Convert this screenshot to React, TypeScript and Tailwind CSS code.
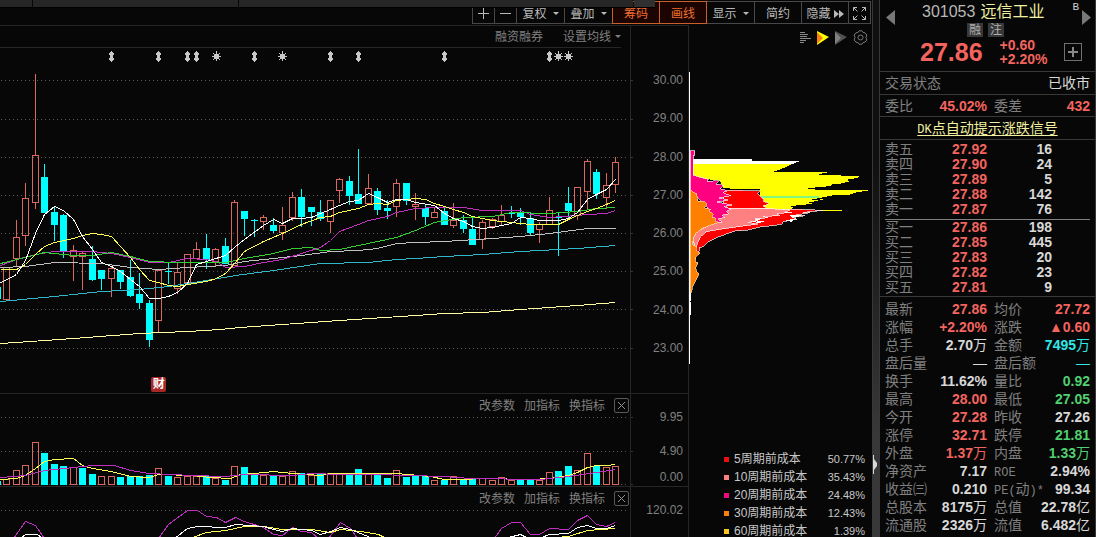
import type { ReactNode } from 'react';

// [high, bodyTop, bodyBottom, low, rising]
type Candle = [number, number, number, number, 0 | 1];

const CANDLES: Candle[] = [
  [267, 267, 300, 300, 1], [220, 237, 259, 267, 1], [183, 198, 236, 246, 1], [74, 155, 203, 209, 1],
  [164, 177, 213, 213, 0], [206, 212, 225, 241, 0], [214, 215, 251, 258, 0], [245, 250, 257, 281, 1],
  [251, 253, 257, 290, 1], [246, 259, 280, 281, 0], [270, 270, 279, 290, 0], [267, 268, 279, 297, 1],
  [270, 270, 282, 289, 0], [260, 277, 296, 297, 0], [273, 294, 303, 309, 0], [300, 303, 340, 347, 0],
  [269, 270, 321, 333, 1], [262, 271, 272, 284, 0], [263, 272, 289, 294, 1], [254, 254, 283, 283, 1],
  [242, 249, 259, 259, 1], [234, 248, 260, 269, 0], [248, 249, 262, 267, 1], [238, 246, 264, 264, 0],
  [200, 202, 266, 266, 1], [211, 211, 219, 236, 0], [219, 220, 221, 237, 0], [215, 217, 222, 230, 1],
  [218, 225, 231, 233, 0], [207, 225, 233, 240, 1], [192, 197, 218, 221, 1], [189, 197, 217, 227, 0],
  [207, 207, 212, 226, 0], [200, 212, 219, 221, 0], [200, 200, 222, 233, 1], [178, 179, 191, 203, 1],
  [176, 181, 196, 205, 0], [149, 194, 204, 204, 0], [174, 188, 204, 204, 1], [188, 191, 210, 215, 0],
  [200, 208, 211, 219, 0], [179, 183, 207, 217, 1], [183, 183, 201, 205, 0], [193, 204, 207, 220, 1],
  [204, 208, 217, 225, 0], [208, 212, 218, 218, 1], [208, 211, 225, 225, 0], [203, 220, 226, 228, 1],
  [215, 220, 229, 233, 0], [218, 229, 245, 245, 0], [220, 222, 240, 249, 1], [218, 219, 227, 229, 1],
  [205, 215, 222, 225, 1], [206, 213, 214, 218, 0], [208, 212, 217, 225, 0], [213, 218, 233, 235, 0],
  [222, 224, 230, 243, 1], [197, 210, 225, 225, 1], [213, 217, 218, 256, 0], [187, 203, 211, 219, 0],
  [187, 187, 216, 220, 1], [159, 161, 192, 210, 1], [169, 172, 194, 199, 0], [173, 185, 198, 209, 1],
  [157, 162, 185, 193, 1],
];

// top of each volume bar, baseline is 485
const VOLUME_TOPS = [
  479, 470, 465, 442, 453, 464, 466, 467, 468, 474, 476, 476, 477, 476, 476, 475, 468, 476, 477, 476,
  476, 476, 478, 480, 466, 467, 474, 475, 476, 476, 471, 473, 475, 474, 473, 473, 475, 469, 473, 475,
  478, 470, 477, 476, 476, 480, 480, 476, 479, 479, 478, 480, 477, 480, 480, 480, 480, 472, 471, 466,
  470, 453, 466, 467, 466,
];
// the few sessions whose volume colour is not simply the candle colour
const VOLUME_OVERRIDES: Record<number, boolean> = {
  8: false, 10: true, 32: true, 43: false, 53: true,
};

const MA_LINES = [
  { color: '#ffffa0', points: '0,343 30,341 73,338 139,333 187,331 220,329 240,327 282,324 339,320 415,315 444,313 482,312 520,309 577,305 615,302' },
  { color: '#30b8c8', points: '0,301 54,296 101,291 139,289 168,286 200,281 235,275 273,270 320,263 368,262 396,259 415,258 444,256 482,254 520,251 577,248 615,245' },
  { color: '#c0c0c0', points: '0,267 25,266 54,262 101,263 130,267 158,269 187,267 225,265 244,261 273,258 301,255 330,251 358,250 377,248 396,243 415,242 444,241 492,238 520,236 549,233 587,228 615,228' },
  { color: '#c030c0', points: '0,265 16,259 35,254 54,251 92,251 111,253 130,257 149,262 168,262 187,258 206,259 216,261 225,267 244,266 263,262 282,259 301,253 320,247 330,240 339,231 358,224 368,220 387,216 396,212 415,208 434,207 463,207 482,210 520,210 530,214 549,217 577,215 587,214 606,213 615,210' },
  { color: '#30d030', points: '0,263 25,257 44,252 73,255 92,255 111,252 130,256 149,261 177,262 225,262 244,258 273,253 292,248 311,247 320,250 339,249 358,245 396,237 415,230 434,222 463,217 492,216 511,212 549,213 577,211 596,208 615,207' },
  { color: '#ffff50', points: '0,269 16,269 25,264 35,254 44,246 54,242 73,238 82,235 92,233 101,234 111,236 120,246 130,257 139,269 149,280 158,282 168,285 177,286 187,284 206,281 216,278 225,273 235,262 244,251 263,241 282,233 301,224 320,217 330,216 339,212 358,208 368,204 377,203 387,204 396,200 415,198 425,199 434,203 444,206 453,209 463,212 472,216 492,220 501,221 511,222 530,224 558,224 568,219 577,215 587,211 596,208 606,204 615,200' },
  { color: '#ffffff', points: '0,282 7,279 16,274 25,260 35,233 44,214 54,206 63,210 73,219 82,236 92,249 101,262 111,266 120,271 130,279 139,286 149,298 158,298 168,296 177,292 187,283 196,264 206,261 225,255 235,246 244,239 263,225 273,219 282,223 292,218 301,218 311,217 320,213 330,209 339,205 349,201 358,200 368,193 377,197 387,202 396,199 406,199 415,202 434,205 444,213 453,218 463,221 472,226 482,228 492,227 501,225 511,223 520,217 530,218 539,220 558,220 568,218 577,212 587,199 596,194 606,189 615,179' },
];

const VOLUME_MA = [
  { color: '#ffff50', points: '0,479 16,478 25,475 35,468 44,461 54,459 73,458 82,465 92,468 111,471 130,476 149,477 158,474 192,475 210,477 230,478 240,474 254,473 273,471 292,473 320,475 330,473 358,473 396,473 430,476 444,479 463,479 482,478 530,479 549,478 568,475 577,472 587,467 596,465 606,465 615,464' },
  { color: '#c030c0', points: '0,477 25,475 44,470 73,467 92,465 114,465 130,470 149,473 192,475 225,476 244,474 292,475 311,473 340,474 374,474 444,476 470,478 540,479 568,476 596,472 615,469' },
];

const KDJ_LINES = [
  { color: '#c030c0', points: '13,538 25,521 35,525 44,538' },
  { color: '#c030c0', points: '158,538 168,524 187,510 197,510 206,516 216,517 225,522 235,517 244,521 263,527 273,534 282,535 292,527 301,531 311,532 318,538' },
  { color: '#c030c0', points: '328,538 340,522 350,528 357,538' },
  { color: '#c030c0', points: '494,538 501,528 511,522 520,522 530,534 539,534 549,528 568,529 577,520 587,515 596,524 606,526 615,522' },
  { color: '#ffff50', points: '192,537 206,532 225,530 244,526 263,526 282,529 311,529 330,532 340,529 360,531 378,534 386,538' },
  { color: '#ffff50', points: '556,537 568,536 587,530 615,528' },
  { color: '#ffffff', points: '20,538 25,534 37,534 42,538' },
  { color: '#ffffff', points: '174,538 187,528 197,526 225,527 235,524 263,526 273,529 282,531 292,528 311,530 320,534 330,531 340,527 350,529 365,535 372,538' },
  { color: '#ffffff', points: '508,537 520,534 528,538' },
  { color: '#ffffff', points: '541,537 549,534 568,533 577,527 587,525 596,528 606,528 615,525' },
];

const PRICE_TICKS = ['30.00', '29.00', '28.00', '27.00', '26.00', '25.00', '24.00', '23.00'];
const PRICE_GRID = [80, 119, 157, 195, 233, 271, 309, 348];
const ARROW_MARKS = [111, 158, 187, 196, 254, 330, 358, 444, 549];
const STAR_MARKS = [216, 282, 558, 568];

const COSTS = [
  { label: '5周期前成本', value: '50.77%', dot: 'bg-[#e81010]' },
  { label: '10周期前成本', value: '35.43%', dot: 'bg-[#f88080]' },
  { label: '20周期前成本', value: '24.48%', dot: 'bg-[#f00880]' },
  { label: '30周期前成本', value: '12.43%', dot: 'bg-[#f88010]' },
  { label: '60周期前成本', value: '1.39%', dot: 'bg-[#f8c820]' },
];

const ASKS = [
  ['卖五', '27.92', '16'], ['卖四', '27.90', '24'], ['卖三', '27.89', '5'], ['卖二', '27.88', '142'], ['卖一', '27.87', '76'],
];
const BIDS = [
  ['买一', '27.86', '198'], ['买二', '27.85', '445'], ['买三', '27.83', '20'], ['买四', '27.82', '23'], ['买五', '27.81', '9'],
];

const RED = 'text-[#f4645f]';
const GREEN = 'text-[#50d070]';
const CYAN = 'text-[#30e8e8]';
const WHITE = 'text-[#d8d8d8]';

type Quote = { label: ReactNode; value: string; unit?: string; tone: string };

const QUOTES: Quote[] = [
  { label: '最新', value: '27.86', tone: RED },
  { label: '均价', value: '27.72', tone: RED },
  { label: '涨幅', value: '+2.20%', tone: RED },
  { label: '涨跌', value: '▲0.60', tone: RED },
  { label: '总手', value: '2.70', unit: '万', tone: WHITE },
  { label: '金额', value: '7495', unit: '万', tone: CYAN },
  { label: '盘后量', value: '', unit: '—', tone: WHITE },
  { label: '盘后额', value: '', unit: '—', tone: CYAN },
  { label: '换手', value: '11.62%', tone: WHITE },
  { label: '量比', value: '0.92', tone: GREEN },
  { label: '最高', value: '28.00', tone: RED },
  { label: '最低', value: '27.05', tone: GREEN },
  { label: '今开', value: '27.28', tone: RED },
  { label: '昨收', value: '27.26', tone: WHITE },
  { label: '涨停', value: '32.71', tone: RED },
  { label: '跌停', value: '21.81', tone: GREEN },
  { label: '外盘', value: '1.37', unit: '万', tone: RED },
  { label: '内盘', value: '1.33', unit: '万', tone: GREEN },
  { label: '净资产', value: '7.17', tone: WHITE },
  { label: <Latin>ROE</Latin>, value: '2.94%', tone: WHITE },
  { label: '收益㈢', value: '0.210', tone: WHITE },
  { label: <><Latin>PE(</Latin>动<Latin>)*</Latin></>, value: '99.34', tone: WHITE },
  { label: '总股本', value: '8175', unit: '万', tone: WHITE },
  { label: '总值', value: '22.78', unit: '亿', tone: WHITE },
  { label: '流通股', value: '2326', unit: '万', tone: WHITE },
  { label: '流值', value: '6.482', unit: '亿', tone: WHITE },
];

const candleX = (i: number) => Math.round(6 + i * 9.52);

function Latin({ children }: { children: ReactNode }) {
  return <span className="font-['Liberation_Mono',monospace] text-[12px]">{children}</span>;
}

function Lines({ lines }: { lines: { color: string; points: string }[] }) {
  return (
    <>
      {lines.map((l) => (
        <polyline key={l.points} points={l.points} fill="none" stroke={l.color} strokeWidth="1" transform="translate(0.5 0.5)" />
      ))}
    </>
  );
}

function GridLine({ y }: { y: number }) {
  return (
    <>
      <line x1="1" x2="628" y1={y + 0.5} y2={y + 0.5} stroke="#585858" strokeDasharray="1 3" />
      <line x1="630" x2="633" y1={y + 0.5} y2={y + 0.5} stroke="#333" />
    </>
  );
}

function PriceChart() {
  return (
    <div className="relative">
      <svg viewBox="0 48 630 345" preserveAspectRatio="none" shapeRendering="crispEdges" className="block h-[345px] w-full overflow-visible">
        {PRICE_GRID.map((y) => <GridLine key={y} y={y} />)}
        {ARROW_MARKS.map((x) => (
          <path key={x} d={`M${x} 51h1v1h1v1h1v2h-1v3h1v2h-1v1h-1v1h-1v-1h-1v-1h-1v-2h1v-3h-1v-2h1v-1h1z`} fill="#c8c8c8" />
        ))}
        {STAR_MARKS.map((x) => (
          <path
            key={x}
            d={`M${x - 2} 54h5v5h-5zM${x} 51h1v10h-1zM${x - 4} 56h9v1h-9zM${x - 3} 53h1v1h-1zM${x + 3} 53h1v1h-1zM${x - 3} 59h1v1h-1zM${x + 3} 59h1v1h-1z`}
            fill="#c8c8c8"
          />
        ))}
        <rect x="0" y="287" width="1" height="12" fill="#0ff" />
        {CANDLES.map(([high, top, bottom, low, rising], i) => {
          const x = candleX(i);
          return rising ? (
            <g key={i} fill="none" stroke="#d9695f">
              <path d={`M${x + 0.5} ${high}V${top}M${x + 0.5} ${bottom}V${low}`} />
              <rect x={x - 2.5} y={top + 0.5} width="6" height={bottom - top - 1} />
            </g>
          ) : (
            <g key={i} fill="#0ff">
              <rect x={x} y={high} width="1" height={low - high} />
              <rect x={x - 3} y={top} width="7" height={bottom - top} />
            </g>
          );
        })}
        <Lines lines={MA_LINES} />
      </svg>
      <button className="absolute bottom-px left-[24%] size-[15px] rounded-[2px] bg-[#a82828] text-[12px] leading-[15px] font-bold text-white">财</button>
    </div>
  );
}

function VolumeChart() {
  return (
    <svg viewBox="0 417 630 69" preserveAspectRatio="none" shapeRendering="crispEdges" className="block h-[69px] w-full overflow-visible">
      <GridLine y={417} />
      <GridLine y={451} />
      <GridLine y={484} />
      <rect x="0" y="481" width="1" height="4" fill="#0ff" />
      {VOLUME_TOPS.map((top, i) => {
        const x = candleX(i);
        const rising = VOLUME_OVERRIDES[i] ?? (CANDLES[i][4] === 1);
        return rising ? (
          <rect key={i} x={x - 2.5} y={top + 0.5} width="6" height={484 - top} fill="none" stroke="#d9695f" />
        ) : (
          <rect key={i} x={x - 3} y={top} width="7" height={485 - top} fill="#0ff" />
        );
      })}
      <Lines lines={VOLUME_MA} />
    </svg>
  );
}

function KdjChart() {
  return (
    <svg viewBox="0 510 630 27" preserveAspectRatio="none" shapeRendering="crispEdges" className="block h-[27px] w-full">
      <GridLine y={510} />
      <Lines lines={KDJ_LINES} />
    </svg>
  );
}

function PaneTools() {
  return (
    <div className="flex h-[23px] items-center justify-end gap-[9px] pr-px text-[12px] leading-[14px] text-[#808080]">
      <button>改参数</button>
      <button>加指标</button>
      <button>换指标</button>
      <button aria-label="关闭" className="grid size-[15px] place-items-center rounded-[2px] border border-[#585858]">
        <svg viewBox="0 0 9 9" className="size-[9px]" stroke="#909090" fill="none"><path d="M1 1l7 7M8 1l-7 7" /></svg>
      </button>
    </div>
  );
}

function Caret() {
  return <svg viewBox="0 0 6 3" className="h-[3px] w-[6px]" fill="currentColor"><path d="M0 0h6L3 3z" /></svg>;
}

function Toolbar() {
  const base = '-ml-px flex h-[23px] items-center justify-center border border-[#484848] pt-[2px]';
  const active = '-ml-px flex h-[23px] items-center justify-center border border-[#c8602c] bg-[#1c0400] pt-[2px] text-[#f07030] z-10';
  return (
    <header className="relative flex h-[25px] shrink-0 justify-end pt-px pr-px text-[12px] leading-[14px] text-[#b8b8b8]">
      <button aria-label="放大" className={`${base} w-[23px]`}>
        <svg viewBox="0 0 11 11" className="size-[11px]" stroke="currentColor"><path d="M0 5.5h11M5.5 0v11" /></svg>
      </button>
      <button aria-label="缩小" className={`${base} w-[23px]`}>
        <svg viewBox="0 0 11 11" className="size-[11px]" stroke="currentColor"><path d="M0 5.5h11" /></svg>
      </button>
      <button className={`${base} w-[49px] gap-[6px]`}>复权<Caret /></button>
      <button className={`${base} w-[49px] gap-[6px]`}>叠加<Caret /></button>
      <button className={`${active} w-[48px]`}>筹码</button>
      <button className={`${active} w-[48px]`}>画线</button>
      <button className={`${base} w-[49px] gap-[6px]`}>显示<Caret /></button>
      <button className={`${base} w-[48px]`}>简约</button>
      <button className={`${base} w-[48px] gap-[3px]`}>
        隐藏
        <svg viewBox="0 0 10 8" className="h-[8px] w-[10px]" fill="currentColor"><path d="M0 0l5 4-5 4zM5 0l5 4-5 4z" /></svg>
      </button>
      <button aria-label="全屏" className={`${base} w-[23px]`}>
        <svg viewBox="0 0 13 13" className="size-[13px]" stroke="currentColor" fill="none">
          <path d="M.5 4V.5H4M.5.5l4 4M9 .5h3.5V4M12.5.5l-4 4M.5 9v3.5H4M.5 12.5l4-4M9 12.5h3.5V9M12.5 12.5l-4-4" />
        </svg>
      </button>
      <div className="absolute inset-x-0 top-0 z-20 flex h-[8px] gap-px pr-[217px]">
        <div className="w-[32px] border-b border-black bg-[#262626]" />
        <div className="w-[205px] border-b border-black bg-[#262626]" />
        <div className="flex-1 border-b border-black bg-[#262626]" />
        <div className="w-[21px] border-b border-black bg-[#303030]" />
      </div>
    </header>
  );
}

function ChipPanel() {
  return (
    <section className="flex w-[184px] shrink-0 flex-col border-l border-[#262626]">
      <div className="flex h-[25px] shrink-0 items-center justify-end gap-[6px] pr-[4px]">
        <button aria-label="列表">
          <svg viewBox="0 0 12 12" className="size-[12px]" stroke="#888" shapeRendering="crispEdges"><path d="M1 .5h5M1 2.5h8M1 4.5h7M1 6.5h11M1 8.500h6M1 10.500h4" /></svg>
        </button>
        <button aria-label="筹码分布">
          <svg viewBox="0 0 12 14" className="h-[14px] w-[12px]"><path d="M0 0l12 6-12 8z" fill="#ff0" /><path d="M0 1l6 6-6 6z" fill="#f88010" /></svg>
        </button>
        <button aria-label="远期筹码">
          <svg viewBox="0 0 12 14" className="h-[14px] w-[12px]"><path d="M0 0l12 6-12 8z" fill="#505050" /><path d="M0 1l6 6-6 6z" fill="#808080" /></svg>
        </button>
        <button aria-label="设置">
          <svg viewBox="0 0 15 15" className="size-[15px]" fill="none" stroke="#787878" strokeLinejoin="round">
            <path d="M6 .8h3l1 1.700 2 .3 1.800 2.200-.8 2.500.8 2.500-1.800 2.200-2 .3-1 1.700H6l-1-1.700-2-.3L1.200 10 2 7.500 1.200 5 3 2.800l2-.3z" />
            <circle cx="7.500" cy="7.500" r="2.500" />
          </svg>
        </button>
      </div>
      <svg viewBox="27 -30 549 1200" preserveAspectRatio="none" shapeRendering="crispEdges" className="block h-[400px] w-full shrink-0">
        <path d="M27 37h3v875h-3zM30 698h3v25h-3zM30 727h3v38h-3z" fill="#fff" />
        <path d="M40 297h175v6h145l-24 10H40z" fill="#fff" />
        <path
          d="M40 312H336L318 322L300 328L282 335L444 337L415 343L420 346L543 347L530 354L495 360L515 363L480 371L450 374L455 378L400 383L370 388L567 391L525 398L510 404L465 405L430 412L390 420L430 418L395 426L370 430L400 430L365 436L330 437L340 444L320 450H240V388L130 385L120 362L85 358L40 346z"
          fill="#ff0"
        />
        <path d="M340 450H486V453H340z" fill="#ff0" />
        <path d="M232 408H418V414H232z" fill="#80f880" />
        <path
          d="M130 391L240 392L232 400L240 408L252 418L250 424L268 430L250 438L262 446H145L130 430zM330 447L430 451L370 457L390 458L348 465L375 467L340 472L350 478L310 485L305 492L285 496L240 501L205 510L165 513L122 528L85 545L70 560L60 562L55 580L46 570L38 540L60 512L100 490L200 460z"
          fill="#f00" stroke="#fff" strokeWidth="2"
        />
        <path
          d="M200 478l30-8-10 8 25-3-18 10 30-3-20 8zM310 483l38-8-12 10zM330 465l45 2-40 6z"
          fill="#fff"
        />
        <path
          d="M145 445L270 446L330 450L315 456L335 457L290 461L300 466L250 470L265 473L225 477L232 482L205 487L235 492L190 498L120 508L80 515L62 530L52 550L48 565L38 540L50 515L100 490z"
          fill="#ff8080" stroke="#fff" strokeWidth="2"
        />
        <path
          d="M31 272H44V285H40V345L60 352L85 358L82 364L118 362L108 372L130 376L120 386L142 392L128 398L152 407L118 414L145 420L112 426L155 435L132 439L152 448L140 453L145 462L125 466L135 472L115 477L125 486H100L80 440L50 410L31 392z"
          fill="#ff0080" stroke="#fff" strokeWidth="2"
        />
        <path
          d="M31 390L50 402L54 424L72 424L82 432L74 444L92 448L88 454L100 462L96 472L108 475L104 484L118 487L95 494L65 506L48 520L40 530L38 555L50 560L48 572L60 580L48 590L46 605L54 608L47 624L50 634L57 642L50 655L44 668L38 680L34 698H31z"
          fill="#ff8000" stroke="#ffe0b0" strokeWidth="2"
        />
      </svg>
      <table className="ml-[35px] w-[141px] text-[12px] leading-[18px] text-[#c8c8c8]">
        <tbody>
          {COSTS.map((c) => (
            <tr key={c.label} className="h-[18px]">
              <th scope="row" className="p-0 text-left font-normal whitespace-nowrap">
                <span className={`mr-[5px] inline-block size-[5px] align-middle ${c.dot}`} />
                {c.label}
              </th>
              <td className="p-0 text-right text-[11px]">{c.value}</td>
            </tr>
          ))}
        </tbody>
      </table>
    </section>
  );
}

function Charts() {
  return (
    <section className="flex min-w-0 flex-1 flex-col border-t border-[#262626]">
      <div className="flex">
        <div className="min-w-0 flex-1">
          <div className="mr-[9px] flex h-[22px] items-center justify-end gap-[20px] border-b border-[#262626] text-[12px] leading-[14px] text-[#808080]">
            <button>融资融券</button>
            <button className="flex items-center gap-[4px]">设置均线<Caret /></button>
          </div>
          <PriceChart />
        </div>
        <Axis>
          <div className="mt-[48px] flex h-[280px] flex-col justify-between">
            {PRICE_TICKS.map((t) => <span key={t}>{t}</span>)}
          </div>
        </Axis>
      </div>
      <div className="flex border-t border-[#262626]">
        <div className="min-w-0 flex-1">
          <PaneTools />
          <VolumeChart />
        </div>
        <Axis>
          <div className="flex flex-col pt-[17px]">
            <span>9.95</span>
            <span className="mt-[22px]">4.90</span>
            <span className="mt-[14px]">0.00</span>
          </div>
        </Axis>
      </div>
      <div className="flex flex-1 border-t border-[#262626]">
        <div className="min-w-0 flex-1">
          <PaneTools />
          <KdjChart />
        </div>
        <Axis>
          <div className="pt-[17px]">120.02</div>
        </Axis>
      </div>
    </section>
  );
}

function Axis({ children }: { children: ReactNode }) {
  return (
    <div className="w-[58px] shrink-0 border-l border-[#262626] pr-[5px] text-right text-[12px] leading-[12px] text-[#808080]">
      {children}
    </div>
  );
}

function BookRows({ rows }: { rows: string[][] }) {
  return (
    <>
      {rows.map(([label, price, qty]) => (
        <tr key={label} className="h-[15px]">
          <th scope="row" className="w-[42px] p-0 text-left font-normal text-[#808080]">{label}</th>
          <td className="w-[60px] p-0 text-right font-bold text-[#f4645f]">{price}</td>
          <td className="w-[65px] p-0 text-right font-bold text-[#d8d8d8]">{qty}</td>
          <td className="p-0" />
        </tr>
      ))}
    </>
  );
}

function QuotePanel() {
  return (
    <aside className="w-[217px] shrink-0 border-x border-[#383838] text-[14px]">
      <div className="flex h-[71px] flex-col">
        <div className="flex h-[23px] items-start">
          <button aria-label="上一只" className="mt-[10px] ml-[6px]">
            <svg viewBox="0 0 9 15" className="h-[15px] w-[9px]" fill="#787878"><path d="M9 0v15L0 7.500z" /></svg>
          </button>
          <h1 className="ml-[27px] flex gap-[5px] text-[16px] leading-[24px] text-[#b8b8b8]">
            301053 <span className="text-[#f0f0a0]">远信工业</span>
          </h1>
          <span className="ml-auto font-['Liberation_Mono',monospace] text-[11px] leading-[14px] text-[#d0d0d0]">B</span>
          <button aria-label="下一只" className="mt-[10px] mr-[4px] ml-[3px]">
            <svg viewBox="0 0 9 15" className="h-[15px] w-[9px]" fill="#787878"><path d="M0 0v15l9-7.500z" /></svg>
          </button>
        </div>
        <div className="flex h-[14px] gap-[5px] pl-[87px] text-center text-[12px] leading-[14px] text-[#b0b0b0]">
          <span className="w-[16px] bg-[#383838]">融</span>
          <span className="w-[16px] bg-[#383838]">注</span>
        </div>
        <div className="flex h-[30px] items-center pr-[13px] pl-[40px] font-bold text-[#f4645f]">
          <span className="text-[25px] leading-[28px]">27.86</span>
          <span className="ml-[17px] text-[14px] leading-[14px]">+0.60<br />+2.20%</span>
          <button aria-label="加入自选" className="ml-auto grid size-[18px] place-items-center border border-[#707070]">
            <svg viewBox="0 0 10 10" className="size-[10px]" stroke="#888" strokeWidth="2"><path d="M0 5h10M5 0v10" /></svg>
          </button>
        </div>
      </div>
      <div className="flex h-[23px] items-center justify-between border-t border-[#383838] px-[5px] leading-[18px] text-[#808080]">
        交易状态<span className="text-[#d8d8d8]">已收市</span>
      </div>
      <dl className="grid h-[22px] grid-cols-[102px_1fr] items-center gap-x-[7px] border-t border-[#383838] px-[5px] leading-[18px]">
        <div className="flex justify-between">
          <dt className="text-[#808080]">委比</dt>
          <dd className="font-bold text-[#f4645f]">45.02%</dd>
        </div>
        <div className="flex justify-between">
          <dt className="text-[#808080]">委差</dt>
          <dd className="font-bold text-[#f4645f]">432</dd>
        </div>
      </dl>
      <div className="h-[24px] border-y border-[#383838] text-center leading-[22px]">
        <a href="#dk" className="text-[#f0f0a0] underline underline-offset-2"><Latin>DK</Latin>点自动提示涨跌信号</a>
      </div>
      <div className="px-[5px] pt-[2px] pb-px leading-[15px]">
        <table className="w-full table-fixed border-separate border-spacing-0">
          <tbody><BookRows rows={ASKS} /></tbody>
        </table>
        <table className="mt-[2px] w-full table-fixed border-separate border-spacing-0 border-t border-[#808080]">
          <tbody><BookRows rows={BIDS} /></tbody>
        </table>
      </div>
      <dl className="grid grid-cols-[102px_1fr] gap-x-[7px] border-t border-[#383838] px-[5px] pt-[3px]">
        {QUOTES.map((q, i) => (
          <div key={i} className="flex h-[18px] justify-between leading-[18px] whitespace-nowrap">
            <dt className="text-[#808080]">{q.label}</dt>
            <dd className={`font-bold ${q.tone}`}>{q.value}{q.unit && <span className="font-normal">{q.unit}</span>}</dd>
          </div>
        ))}
      </dl>
    </aside>
  );
}

export default function App() {
  return (
    <main className="flex h-screen overflow-hidden bg-[#070707] font-['Liberation_Sans','Noto_Sans_CJK_SC',sans-serif]">
      <div className="flex min-w-0 flex-1 flex-col">
        <Toolbar />
        <div className="flex flex-1">
          <Charts />
          <ChipPanel />
        </div>
      </div>
      <div className="flex w-[7px] shrink-0 flex-col border-l border-[#383838] bg-linear-to-b from-[#101010] from-30% to-[#383838] to-80%">
        <button aria-label="收起侧栏" className="mt-[455px]">
          <svg viewBox="0 0 5 19" className="h-[19px] w-[5px]" fill="#d8d8d8"><path d="M0 0h1v4l3 4v3l-3 4v4H0z" /></svg>
        </button>
      </div>
      <QuotePanel />
    </main>
  );
}
